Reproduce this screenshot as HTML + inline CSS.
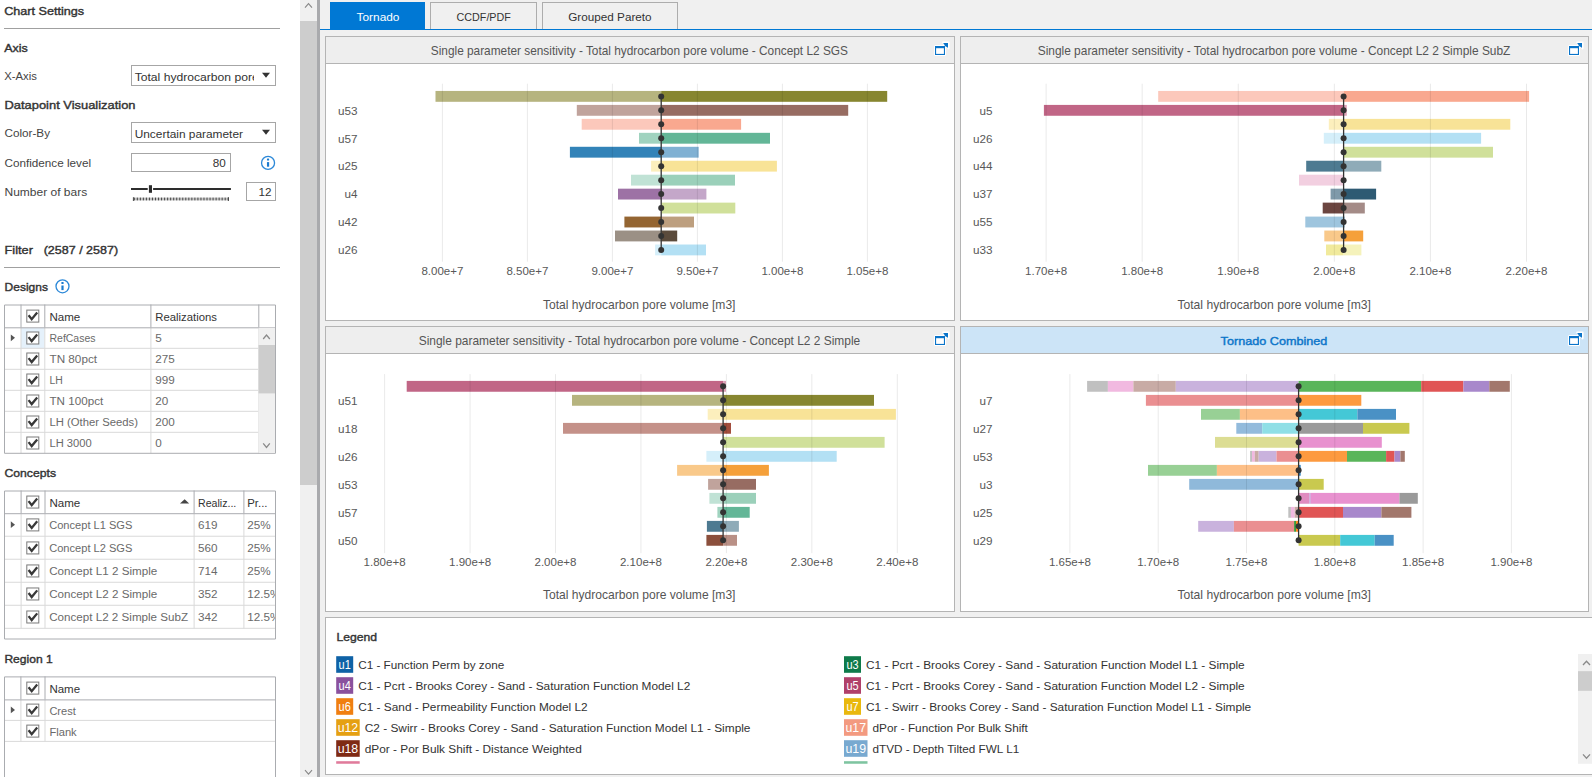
<!DOCTYPE html>
<html><head><meta charset="utf-8"><title>Tornado</title>
<style>
html,body{margin:0;padding:0;width:1592px;height:777px;overflow:hidden;background:#f0f0f0;}
svg{position:absolute;left:0;top:0;display:block;font-family:"Liberation Sans", sans-serif;}
</style></head><body>
<svg width="1592" height="777" viewBox="0 0 1592 777">
<rect x="0" y="0" width="1592" height="777" fill="#f0f0f0"/>
<rect x="0" y="0" width="300" height="777" fill="#ffffff"/>
<rect x="300" y="0" width="17" height="777" fill="#f0f0f0"/>
<rect x="300" y="21" width="17" height="464" fill="#cdcdcd"/>
<path d="M305 7.6 L308.5 3.6 L312 7.6" fill="none" stroke="#888" stroke-width="1.1"/>
<path d="M305 770.2 L308.5 774.2 L312 770.2" fill="none" stroke="#888" stroke-width="1.1"/>
<rect x="317" y="0" width="3" height="777" fill="#a9aaad"/>
<rect x="330" y="2" width="95" height="27" fill="#0078d4"/>
<rect x="430.5" y="2.5" width="106" height="27" fill="#f0f0f0" stroke="#adadad" stroke-width="1"/>
<rect x="542.5" y="2.5" width="135" height="27" fill="#f0f0f0" stroke="#adadad" stroke-width="1"/>
<rect x="320" y="29" width="1272" height="1" fill="#0078d4"/>
<text x="378" y="20.8" font-size="11.8" font-weight="normal" fill="#ffffff" text-anchor="middle" textLength="42.9" lengthAdjust="spacingAndGlyphs">Tornado</text>
<text x="483.7" y="20.8" font-size="11.8" font-weight="normal" fill="#333" text-anchor="middle" textLength="54.3" lengthAdjust="spacingAndGlyphs">CCDF/PDF</text>
<text x="609.9" y="20.8" font-size="11.8" font-weight="normal" fill="#333" text-anchor="middle" textLength="83.5" lengthAdjust="spacingAndGlyphs">Grouped Pareto</text>
<text x="4.2" y="14.8" font-size="11.7" font-weight="normal" fill="#333333" text-anchor="start" textLength="80" lengthAdjust="spacingAndGlyphs" stroke="#333333" stroke-width="0.4">Chart Settings</text>
<line x1="4" y1="28.5" x2="280" y2="28.5" stroke="#a0a0a0" stroke-width="1"/>
<text x="4.2" y="51.5" font-size="11.7" font-weight="normal" fill="#333333" text-anchor="start" textLength="23.6" lengthAdjust="spacingAndGlyphs" stroke="#333333" stroke-width="0.4">Axis</text>
<text x="4.2" y="79.9" font-size="11.7" font-weight="normal" fill="#444444" text-anchor="start" textLength="32.6" lengthAdjust="spacingAndGlyphs">X-Axis</text>
<clipPath id="cb1"><rect x="132" y="66" width="122" height="19"/></clipPath>
<rect x="131.5" y="65.5" width="144" height="20" fill="#ffffff" stroke="#a6a6a6" stroke-width="1"/>
<text x="134.7" y="80.5" font-size="11.7" font-weight="normal" fill="#333333" text-anchor="start" textLength="193.5" lengthAdjust="spacingAndGlyphs" clip-path="url(#cb1)">Total hydrocarbon pore volume [m3]</text>
<path d="M262 72.7 L270 72.7 L266 77.7 Z" fill="#333"/>
<text x="4.5" y="108.8" font-size="11.7" font-weight="normal" fill="#333333" text-anchor="start" textLength="131" lengthAdjust="spacingAndGlyphs" stroke="#333333" stroke-width="0.4">Datapoint Visualization</text>
<text x="4.5" y="136.6" font-size="11.7" font-weight="normal" fill="#444444" text-anchor="start" textLength="45.5" lengthAdjust="spacingAndGlyphs">Color-By</text>
<rect x="131.5" y="122.5" width="144" height="20" fill="#ffffff" stroke="#a6a6a6" stroke-width="1"/>
<text x="134.7" y="137.6" font-size="11.7" font-weight="normal" fill="#333333" text-anchor="start" textLength="108.3" lengthAdjust="spacingAndGlyphs">Uncertain parameter</text>
<path d="M262 129.7 L270 129.7 L266 134.7 Z" fill="#333"/>
<text x="4.5" y="166.6" font-size="11.7" font-weight="normal" fill="#444444" text-anchor="start" textLength="86.5" lengthAdjust="spacingAndGlyphs">Confidence level</text>
<rect x="131.5" y="153.5" width="99" height="18" fill="#ffffff" stroke="#a6a6a6" stroke-width="1"/>
<text x="225.8" y="167.3" font-size="11.7" font-weight="normal" fill="#333333" text-anchor="end">80</text>
<circle cx="268.05" cy="162.9" r="6.5" fill="none" stroke="#2b88d8" stroke-width="1.3"/>
<rect x="266.95" y="162.1" width="2.2" height="4.6" fill="#1a7bd0"/>
<rect x="266.95" y="158.6" width="2.2" height="2" rx="0.6" fill="#1a7bd0"/>
<text x="4.5" y="195.7" font-size="11.7" font-weight="normal" fill="#444444" text-anchor="start" textLength="82.7" lengthAdjust="spacingAndGlyphs">Number of bars</text>
<rect x="131" y="188" width="16.7" height="2" fill="#2d2d2d"/>
<rect x="153.1" y="188" width="77.8" height="2" fill="#2d2d2d"/>
<rect x="148.9" y="185.2" width="3.1" height="7.6" fill="#2d2d2d"/>
<rect x="133.5" y="197.6" width="94.8" height="2.8" fill="#c4c4c4"/>
<path d="M134.30 197.6 V200.4 M137.33 197.6 V200.4 M140.36 197.6 V200.4 M143.39 197.6 V200.4 M146.42 197.6 V200.4 M149.45 197.6 V200.4 M152.48 197.6 V200.4 M155.51 197.6 V200.4 M158.54 197.6 V200.4 M161.57 197.6 V200.4 M164.60 197.6 V200.4 M167.63 197.6 V200.4 M170.66 197.6 V200.4 M173.69 197.6 V200.4 M176.72 197.6 V200.4 M179.75 197.6 V200.4 M182.78 197.6 V200.4 M185.81 197.6 V200.4 M188.84 197.6 V200.4 M191.87 197.6 V200.4 M194.90 197.6 V200.4 M197.93 197.6 V200.4 M200.96 197.6 V200.4 M203.99 197.6 V200.4 M207.02 197.6 V200.4 M210.05 197.6 V200.4 M213.08 197.6 V200.4 M216.11 197.6 V200.4 M219.14 197.6 V200.4 M222.17 197.6 V200.4 M225.20 197.6 V200.4 M228.23 197.6 V200.4 " stroke="#3a3a3a" stroke-width="0.9"/>
<path d="M133.4 197.2 V201 M228.4 197.2 V201" stroke="#3a3a3a" stroke-width="0.9"/>
<rect x="246.5" y="182.5" width="29" height="18" fill="#ffffff" stroke="#a6a6a6" stroke-width="1"/>
<text x="271.5" y="196.4" font-size="11.7" font-weight="normal" fill="#333333" text-anchor="end">12</text>
<text x="4.6" y="253.8" font-size="11.7" font-weight="normal" fill="#333333" text-anchor="start" textLength="28.3" lengthAdjust="spacingAndGlyphs" stroke="#333333" stroke-width="0.4">Filter</text>
<text x="43.7" y="253.8" font-size="11.7" font-weight="normal" fill="#333333" text-anchor="start" textLength="74.4" lengthAdjust="spacingAndGlyphs" stroke="#333333" stroke-width="0.4">(2587 / 2587)</text>
<line x1="4" y1="267.5" x2="280" y2="267.5" stroke="#a0a0a0" stroke-width="1"/>
<text x="4.6" y="290.6" font-size="11.7" font-weight="normal" fill="#333333" text-anchor="start" textLength="43.3" lengthAdjust="spacingAndGlyphs" stroke="#333333" stroke-width="0.4">Designs</text>
<circle cx="62.5" cy="286.3" r="6.5" fill="none" stroke="#2b88d8" stroke-width="1.3"/>
<rect x="61.4" y="285.5" width="2.2" height="4.6" fill="#1a7bd0"/>
<rect x="61.4" y="282.0" width="2.2" height="2" rx="0.6" fill="#1a7bd0"/>
<rect x="4.5" y="305.0" width="271.0" height="148.8" fill="#ffffff"/>
<rect x="21.0" y="327.8" width="23.299999999999997" height="20.5" fill="#e5f1fb"/>
<line x1="4.5" y1="348.3" x2="258.3" y2="348.3" stroke="#d9d9d9" stroke-width="1"/>
<line x1="4.5" y1="369.3" x2="258.3" y2="369.3" stroke="#d9d9d9" stroke-width="1"/>
<line x1="4.5" y1="390.3" x2="258.3" y2="390.3" stroke="#d9d9d9" stroke-width="1"/>
<line x1="4.5" y1="411.3" x2="258.3" y2="411.3" stroke="#d9d9d9" stroke-width="1"/>
<line x1="4.5" y1="432.3" x2="258.3" y2="432.3" stroke="#d9d9d9" stroke-width="1"/>
<line x1="21.0" y1="327.3" x2="21.0" y2="453.3" stroke="#d9d9d9" stroke-width="1"/>
<line x1="44.8" y1="327.3" x2="44.8" y2="453.3" stroke="#d9d9d9" stroke-width="1"/>
<line x1="150.9" y1="327.3" x2="150.9" y2="453.3" stroke="#d9d9d9" stroke-width="1"/>
<line x1="258.8" y1="327.3" x2="258.8" y2="453.3" stroke="#d9d9d9" stroke-width="1"/>
<line x1="21.0" y1="304.5" x2="21.0" y2="327.3" stroke="#aaacb0" stroke-width="1"/>
<line x1="44.8" y1="304.5" x2="44.8" y2="327.3" stroke="#aaacb0" stroke-width="1"/>
<line x1="150.9" y1="304.5" x2="150.9" y2="327.3" stroke="#aaacb0" stroke-width="1"/>
<line x1="258.8" y1="304.5" x2="258.8" y2="327.3" stroke="#aaacb0" stroke-width="1"/>
<line x1="4.5" y1="327.8" x2="275.5" y2="327.8" stroke="#aaacb0" stroke-width="1"/>
<path d="M4.5 453.3 V305.0 H275.5 V453.3 H4.5" fill="none" stroke="#aaacb0" stroke-width="1"/>
<clipPath id="tc1"><rect x="45.3" y="304.5" width="104.60000000000001" height="148.8"/></clipPath>
<clipPath id="tc2"><rect x="151.4" y="304.5" width="106.4" height="148.8"/></clipPath>
<clipPath id="tc3"><rect x="259.3" y="304.5" width="15.699999999999989" height="148.8"/></clipPath>
<rect x="26.8" y="310.09999999999997" width="12" height="12" fill="#ffffff" stroke="#7a7a7a" stroke-width="1"/>
<path d="M28.6 315.2 L31.700000000000003 319.2 L37.2 312.49999999999994" fill="none" stroke="#383838" stroke-width="2.3" stroke-linejoin="miter"/>
<text x="49.4" y="320.59999999999997" font-size="11.7" font-weight="normal" fill="#333333" text-anchor="start" textLength="30.9" lengthAdjust="spacingAndGlyphs" clip-path="url(#tc1)">Name</text>
<text x="155.3" y="320.59999999999997" font-size="11.7" font-weight="normal" fill="#333333" text-anchor="start" textLength="61.6" lengthAdjust="spacingAndGlyphs" clip-path="url(#tc2)">Realizations</text>
<rect x="26.8" y="332.0" width="12" height="12" fill="#ffffff" stroke="#7a7a7a" stroke-width="1"/>
<path d="M28.6 337.1 L31.700000000000003 341.1 L37.2 334.4" fill="none" stroke="#383838" stroke-width="2.3" stroke-linejoin="miter"/>
<path d="M10.8 334.40000000000003 L15.0 337.8 L10.8 341.2 Z" fill="#555"/>
<text x="49.5" y="342.40000000000003" font-size="11.7" font-weight="normal" fill="#6a6a6a" text-anchor="start" textLength="46" lengthAdjust="spacingAndGlyphs" clip-path="url(#tc1)">RefCases</text>
<text x="155.3" y="342.40000000000003" font-size="11.7" font-weight="normal" fill="#6a6a6a" text-anchor="start" clip-path="url(#tc2)">5</text>
<rect x="26.8" y="353.0" width="12" height="12" fill="#ffffff" stroke="#7a7a7a" stroke-width="1"/>
<path d="M28.6 358.1 L31.700000000000003 362.1 L37.2 355.4" fill="none" stroke="#383838" stroke-width="2.3" stroke-linejoin="miter"/>
<text x="49.5" y="363.40000000000003" font-size="11.7" font-weight="normal" fill="#6a6a6a" text-anchor="start" textLength="47.5" lengthAdjust="spacingAndGlyphs" clip-path="url(#tc1)">TN 80pct</text>
<text x="155.3" y="363.40000000000003" font-size="11.7" font-weight="normal" fill="#6a6a6a" text-anchor="start" clip-path="url(#tc2)">275</text>
<rect x="26.8" y="374.0" width="12" height="12" fill="#ffffff" stroke="#7a7a7a" stroke-width="1"/>
<path d="M28.6 379.1 L31.700000000000003 383.1 L37.2 376.4" fill="none" stroke="#383838" stroke-width="2.3" stroke-linejoin="miter"/>
<text x="49.5" y="384.40000000000003" font-size="11.7" font-weight="normal" fill="#6a6a6a" text-anchor="start" textLength="13.3" lengthAdjust="spacingAndGlyphs" clip-path="url(#tc1)">LH</text>
<text x="155.3" y="384.40000000000003" font-size="11.7" font-weight="normal" fill="#6a6a6a" text-anchor="start" clip-path="url(#tc2)">999</text>
<rect x="26.8" y="395.0" width="12" height="12" fill="#ffffff" stroke="#7a7a7a" stroke-width="1"/>
<path d="M28.6 400.1 L31.700000000000003 404.1 L37.2 397.4" fill="none" stroke="#383838" stroke-width="2.3" stroke-linejoin="miter"/>
<text x="49.5" y="405.40000000000003" font-size="11.7" font-weight="normal" fill="#6a6a6a" text-anchor="start" textLength="53.7" lengthAdjust="spacingAndGlyphs" clip-path="url(#tc1)">TN 100pct</text>
<text x="155.3" y="405.40000000000003" font-size="11.7" font-weight="normal" fill="#6a6a6a" text-anchor="start" clip-path="url(#tc2)">20</text>
<rect x="26.8" y="416.0" width="12" height="12" fill="#ffffff" stroke="#7a7a7a" stroke-width="1"/>
<path d="M28.6 421.1 L31.700000000000003 425.1 L37.2 418.4" fill="none" stroke="#383838" stroke-width="2.3" stroke-linejoin="miter"/>
<text x="49.5" y="426.40000000000003" font-size="11.7" font-weight="normal" fill="#6a6a6a" text-anchor="start" textLength="88.5" lengthAdjust="spacingAndGlyphs" clip-path="url(#tc1)">LH (Other Seeds)</text>
<text x="155.3" y="426.40000000000003" font-size="11.7" font-weight="normal" fill="#6a6a6a" text-anchor="start" clip-path="url(#tc2)">200</text>
<rect x="26.8" y="437.0" width="12" height="12" fill="#ffffff" stroke="#7a7a7a" stroke-width="1"/>
<path d="M28.6 442.1 L31.700000000000003 446.1 L37.2 439.4" fill="none" stroke="#383838" stroke-width="2.3" stroke-linejoin="miter"/>
<text x="49.5" y="447.40000000000003" font-size="11.7" font-weight="normal" fill="#6a6a6a" text-anchor="start" textLength="42.2" lengthAdjust="spacingAndGlyphs" clip-path="url(#tc1)">LH 3000</text>
<text x="155.3" y="447.40000000000003" font-size="11.7" font-weight="normal" fill="#6a6a6a" text-anchor="start" clip-path="url(#tc2)">0</text>
<rect x="258.5" y="327.8" width="16.5" height="125" fill="#f0f0f0"/>
<rect x="258.5" y="345" width="16.5" height="48.4" fill="#cdcdcd"/>
<path d="M263.2 339 L266.5 335 L269.8 339" fill="none" stroke="#8a8a8a" stroke-width="1.3"/>
<path d="M263.2 443.4 L266.5 447.4 L269.8 443.4" fill="none" stroke="#8a8a8a" stroke-width="1.3"/>
<text x="4.5" y="476.9" font-size="11.7" font-weight="normal" fill="#333333" text-anchor="start" textLength="51.5" lengthAdjust="spacingAndGlyphs" stroke="#333333" stroke-width="0.4">Concepts</text>
<rect x="4.5" y="491.0" width="271.0" height="148.5" fill="#ffffff"/>
<line x1="4.5" y1="536.22" x2="275.5" y2="536.22" stroke="#d9d9d9" stroke-width="1"/>
<line x1="4.5" y1="559.24" x2="275.5" y2="559.24" stroke="#d9d9d9" stroke-width="1"/>
<line x1="4.5" y1="582.26" x2="275.5" y2="582.26" stroke="#d9d9d9" stroke-width="1"/>
<line x1="4.5" y1="605.2800000000001" x2="275.5" y2="605.2800000000001" stroke="#d9d9d9" stroke-width="1"/>
<line x1="4.5" y1="628.3000000000001" x2="275.5" y2="628.3000000000001" stroke="#d9d9d9" stroke-width="1"/>
<line x1="21.1" y1="513.2" x2="21.1" y2="628.3000000000001" stroke="#d9d9d9" stroke-width="1"/>
<line x1="45.0" y1="513.2" x2="45.0" y2="628.3000000000001" stroke="#d9d9d9" stroke-width="1"/>
<line x1="194.1" y1="513.2" x2="194.1" y2="628.3000000000001" stroke="#d9d9d9" stroke-width="1"/>
<line x1="243.9" y1="513.2" x2="243.9" y2="628.3000000000001" stroke="#d9d9d9" stroke-width="1"/>
<line x1="21.1" y1="490.5" x2="21.1" y2="513.2" stroke="#aaacb0" stroke-width="1"/>
<line x1="45.0" y1="490.5" x2="45.0" y2="513.2" stroke="#aaacb0" stroke-width="1"/>
<line x1="194.1" y1="490.5" x2="194.1" y2="513.2" stroke="#aaacb0" stroke-width="1"/>
<line x1="243.9" y1="490.5" x2="243.9" y2="513.2" stroke="#aaacb0" stroke-width="1"/>
<line x1="4.5" y1="513.7" x2="275.5" y2="513.7" stroke="#aaacb0" stroke-width="1"/>
<path d="M4.5 639 V491.0 H275.5 V639 H4.5" fill="none" stroke="#aaacb0" stroke-width="1"/>
<clipPath id="tc4"><rect x="45.5" y="490.5" width="147.6" height="148.5"/></clipPath>
<clipPath id="tc5"><rect x="194.6" y="490.5" width="48.30000000000001" height="148.5"/></clipPath>
<clipPath id="tc6"><rect x="244.4" y="490.5" width="30.599999999999994" height="148.5"/></clipPath>
<rect x="26.8" y="496.05" width="12" height="12" fill="#ffffff" stroke="#7a7a7a" stroke-width="1"/>
<path d="M28.6 501.15000000000003 L31.700000000000003 505.15000000000003 L37.2 498.45" fill="none" stroke="#383838" stroke-width="2.3" stroke-linejoin="miter"/>
<text x="49.4" y="506.55" font-size="11.7" font-weight="normal" fill="#333333" text-anchor="start" textLength="30.9" lengthAdjust="spacingAndGlyphs" clip-path="url(#tc4)">Name</text>
<text x="198" y="506.55" font-size="11.7" font-weight="normal" fill="#333333" text-anchor="start" textLength="38.3" lengthAdjust="spacingAndGlyphs" clip-path="url(#tc5)">Realiz...</text>
<text x="247.2" y="506.55" font-size="11.7" font-weight="normal" fill="#333333" text-anchor="start" textLength="20.3" lengthAdjust="spacingAndGlyphs" clip-path="url(#tc6)">Pr...</text>
<rect x="26.8" y="518.9100000000001" width="12" height="12" fill="#ffffff" stroke="#7a7a7a" stroke-width="1"/>
<path d="M28.6 524.0100000000001 L31.700000000000003 528.0100000000001 L37.2 521.3100000000001" fill="none" stroke="#383838" stroke-width="2.3" stroke-linejoin="miter"/>
<path d="M10.8 521.3100000000001 L15.0 524.71 L10.8 528.11 Z" fill="#555"/>
<text x="49.2" y="529.3100000000001" font-size="11.7" font-weight="normal" fill="#6a6a6a" text-anchor="start" textLength="83.2" lengthAdjust="spacingAndGlyphs" clip-path="url(#tc4)">Concept L1 SGS</text>
<text x="198" y="529.3100000000001" font-size="11.7" font-weight="normal" fill="#6a6a6a" text-anchor="start" clip-path="url(#tc5)">619</text>
<text x="247.2" y="529.3100000000001" font-size="11.7" font-weight="normal" fill="#6a6a6a" text-anchor="start" clip-path="url(#tc6)">25%</text>
<rect x="26.8" y="541.9300000000001" width="12" height="12" fill="#ffffff" stroke="#7a7a7a" stroke-width="1"/>
<path d="M28.6 547.0300000000001 L31.700000000000003 551.0300000000001 L37.2 544.33" fill="none" stroke="#383838" stroke-width="2.3" stroke-linejoin="miter"/>
<text x="49.2" y="552.33" font-size="11.7" font-weight="normal" fill="#6a6a6a" text-anchor="start" textLength="83.2" lengthAdjust="spacingAndGlyphs" clip-path="url(#tc4)">Concept L2 SGS</text>
<text x="198" y="552.33" font-size="11.7" font-weight="normal" fill="#6a6a6a" text-anchor="start" clip-path="url(#tc5)">560</text>
<text x="247.2" y="552.33" font-size="11.7" font-weight="normal" fill="#6a6a6a" text-anchor="start" clip-path="url(#tc6)">25%</text>
<rect x="26.8" y="564.95" width="12" height="12" fill="#ffffff" stroke="#7a7a7a" stroke-width="1"/>
<path d="M28.6 570.0500000000001 L31.700000000000003 574.0500000000001 L37.2 567.35" fill="none" stroke="#383838" stroke-width="2.3" stroke-linejoin="miter"/>
<text x="49.2" y="575.35" font-size="11.7" font-weight="normal" fill="#6a6a6a" text-anchor="start" textLength="108" lengthAdjust="spacingAndGlyphs" clip-path="url(#tc4)">Concept L1 2 Simple</text>
<text x="198" y="575.35" font-size="11.7" font-weight="normal" fill="#6a6a6a" text-anchor="start" clip-path="url(#tc5)">714</text>
<text x="247.2" y="575.35" font-size="11.7" font-weight="normal" fill="#6a6a6a" text-anchor="start" clip-path="url(#tc6)">25%</text>
<rect x="26.8" y="587.97" width="12" height="12" fill="#ffffff" stroke="#7a7a7a" stroke-width="1"/>
<path d="M28.6 593.07 L31.700000000000003 597.07 L37.2 590.37" fill="none" stroke="#383838" stroke-width="2.3" stroke-linejoin="miter"/>
<text x="49.2" y="598.37" font-size="11.7" font-weight="normal" fill="#6a6a6a" text-anchor="start" textLength="108" lengthAdjust="spacingAndGlyphs" clip-path="url(#tc4)">Concept L2 2 Simple</text>
<text x="198" y="598.37" font-size="11.7" font-weight="normal" fill="#6a6a6a" text-anchor="start" clip-path="url(#tc5)">352</text>
<text x="247.2" y="598.37" font-size="11.7" font-weight="normal" fill="#6a6a6a" text-anchor="start" clip-path="url(#tc6)">12.5%</text>
<rect x="26.8" y="610.9900000000001" width="12" height="12" fill="#ffffff" stroke="#7a7a7a" stroke-width="1"/>
<path d="M28.6 616.0900000000001 L31.700000000000003 620.0900000000001 L37.2 613.3900000000001" fill="none" stroke="#383838" stroke-width="2.3" stroke-linejoin="miter"/>
<text x="49.2" y="621.3900000000001" font-size="11.7" font-weight="normal" fill="#6a6a6a" text-anchor="start" textLength="138.9" lengthAdjust="spacingAndGlyphs" clip-path="url(#tc4)">Concept L2 2 Simple SubZ</text>
<text x="198" y="621.3900000000001" font-size="11.7" font-weight="normal" fill="#6a6a6a" text-anchor="start" clip-path="url(#tc5)">342</text>
<text x="247.2" y="621.3900000000001" font-size="11.7" font-weight="normal" fill="#6a6a6a" text-anchor="start" clip-path="url(#tc6)">12.5%</text>
<path d="M180 503.6 L184.6 499.2 L189.2 503.6 Z" fill="#444"/>
<text x="4.4" y="663" font-size="11.7" font-weight="normal" fill="#333333" text-anchor="start" textLength="48.4" lengthAdjust="spacingAndGlyphs" stroke="#333333" stroke-width="0.4">Region 1</text>
<rect x="4.5" y="676.9" width="271.0" height="123.60000000000002" fill="#ffffff"/>
<line x1="4.5" y1="720.4" x2="275.5" y2="720.4" stroke="#d9d9d9" stroke-width="1"/>
<line x1="4.5" y1="741.4" x2="275.5" y2="741.4" stroke="#d9d9d9" stroke-width="1"/>
<line x1="20.9" y1="699.4" x2="20.9" y2="741.4" stroke="#d9d9d9" stroke-width="1"/>
<line x1="45.0" y1="699.4" x2="45.0" y2="741.4" stroke="#d9d9d9" stroke-width="1"/>
<line x1="20.9" y1="676.4" x2="20.9" y2="699.4" stroke="#aaacb0" stroke-width="1"/>
<line x1="45.0" y1="676.4" x2="45.0" y2="699.4" stroke="#aaacb0" stroke-width="1"/>
<line x1="4.5" y1="699.9" x2="275.5" y2="699.9" stroke="#aaacb0" stroke-width="1"/>
<path d="M4.5 800 V676.9 H275.5 V800" fill="none" stroke="#aaacb0" stroke-width="1"/>
<clipPath id="tc7"><rect x="45.5" y="676.4" width="229.5" height="123.60000000000002"/></clipPath>
<rect x="26.8" y="682.1" width="12" height="12" fill="#ffffff" stroke="#7a7a7a" stroke-width="1"/>
<path d="M28.6 687.2 L31.700000000000003 691.2 L37.2 684.5" fill="none" stroke="#383838" stroke-width="2.3" stroke-linejoin="miter"/>
<text x="49.4" y="692.6" font-size="11.7" font-weight="normal" fill="#333333" text-anchor="start" textLength="30.7" lengthAdjust="spacingAndGlyphs" clip-path="url(#tc7)">Name</text>
<rect x="26.8" y="704.1" width="12" height="12" fill="#ffffff" stroke="#7a7a7a" stroke-width="1"/>
<path d="M28.6 709.2 L31.700000000000003 713.2 L37.2 706.5" fill="none" stroke="#383838" stroke-width="2.3" stroke-linejoin="miter"/>
<path d="M10.8 706.5 L15.0 709.9 L10.8 713.3 Z" fill="#555"/>
<text x="49.4" y="714.5" font-size="11.7" font-weight="normal" fill="#6a6a6a" text-anchor="start" textLength="26.4" lengthAdjust="spacingAndGlyphs" clip-path="url(#tc7)">Crest</text>
<rect x="26.8" y="725.1" width="12" height="12" fill="#ffffff" stroke="#7a7a7a" stroke-width="1"/>
<path d="M28.6 730.2 L31.700000000000003 734.2 L37.2 727.5" fill="none" stroke="#383838" stroke-width="2.3" stroke-linejoin="miter"/>
<text x="49.4" y="735.5" font-size="11.7" font-weight="normal" fill="#6a6a6a" text-anchor="start" textLength="27.3" lengthAdjust="spacingAndGlyphs" clip-path="url(#tc7)">Flank</text>
<rect x="325.5" y="36.5" width="629" height="284" fill="#ffffff" stroke="#b4b4b4" stroke-width="1"/>
<rect x="326" y="37" width="628" height="26" fill="#eeeeee"/>
<line x1="326" y1="63.5" x2="954" y2="63.5" stroke="#b4b4b4" stroke-width="1"/>
<text x="639.35" y="54.85" font-size="11.85" font-weight="normal" fill="#555555" text-anchor="middle" textLength="417.1" lengthAdjust="spacingAndGlyphs">Single parameter sensitivity - Total hydrocarbon pore volume - Concept L2 SGS</text>
<path d="M943 42.4 H948.8 V48.6 Z" fill="#ffffff" stroke="#ffffff" stroke-width="1.6" stroke-linejoin="round"/>
<rect x="934" y="45" width="12" height="11" rx="1.5" fill="#ffffff"/>
<rect x="935.55" y="46.55" width="8.9" height="7.9" fill="#ffffff" stroke="#0a74c9" stroke-width="1.1"/>
<rect x="935" y="46" width="10" height="2.2" fill="#0a74c9"/>
<path d="M943 43 H948 V48 Z" fill="#0a74c9"/>
<path d="M944.5 44.4 L946.6 46.6" stroke="#0a74c9" stroke-width="1.3"/>
<rect x="960.5" y="36.5" width="628" height="284" fill="#ffffff" stroke="#b4b4b4" stroke-width="1"/>
<rect x="961" y="37" width="627" height="26" fill="#eeeeee"/>
<line x1="961" y1="63.5" x2="1588" y2="63.5" stroke="#b4b4b4" stroke-width="1"/>
<text x="1274.05" y="54.85" font-size="11.85" font-weight="normal" fill="#555555" text-anchor="middle" textLength="472.7" lengthAdjust="spacingAndGlyphs">Single parameter sensitivity - Total hydrocarbon pore volume - Concept L2 2 Simple SubZ</text>
<path d="M1577 42.4 H1582.8 V48.6 Z" fill="#ffffff" stroke="#ffffff" stroke-width="1.6" stroke-linejoin="round"/>
<rect x="1568" y="45" width="12" height="11" rx="1.5" fill="#ffffff"/>
<rect x="1569.55" y="46.55" width="8.9" height="7.9" fill="#ffffff" stroke="#0a74c9" stroke-width="1.1"/>
<rect x="1569" y="46" width="10" height="2.2" fill="#0a74c9"/>
<path d="M1577 43 H1582 V48 Z" fill="#0a74c9"/>
<path d="M1578.5 44.4 L1580.6 46.6" stroke="#0a74c9" stroke-width="1.3"/>
<rect x="325.5" y="326.5" width="629" height="285" fill="#ffffff" stroke="#b4b4b4" stroke-width="1"/>
<rect x="326" y="327" width="628" height="26" fill="#eeeeee"/>
<line x1="326" y1="353.5" x2="954" y2="353.5" stroke="#b4b4b4" stroke-width="1"/>
<text x="639.45" y="344.85" font-size="11.85" font-weight="normal" fill="#555555" text-anchor="middle" textLength="441.5" lengthAdjust="spacingAndGlyphs">Single parameter sensitivity - Total hydrocarbon pore volume - Concept L2 2 Simple</text>
<path d="M943 332.4 H948.8 V338.6 Z" fill="#ffffff" stroke="#ffffff" stroke-width="1.6" stroke-linejoin="round"/>
<rect x="934" y="335" width="12" height="11" rx="1.5" fill="#ffffff"/>
<rect x="935.55" y="336.55" width="8.9" height="7.9" fill="#ffffff" stroke="#0a74c9" stroke-width="1.1"/>
<rect x="935" y="336" width="10" height="2.2" fill="#0a74c9"/>
<path d="M943 333 H948 V338 Z" fill="#0a74c9"/>
<path d="M944.5 334.4 L946.6 336.6" stroke="#0a74c9" stroke-width="1.3"/>
<rect x="960.5" y="326.5" width="628" height="285" fill="#ffffff" stroke="#b4b4b4" stroke-width="1"/>
<rect x="961" y="327" width="627" height="26" fill="#cce4f7"/>
<line x1="961" y1="353.5" x2="1588" y2="353.5" stroke="#b4b4b4" stroke-width="1"/>
<text x="1274" y="344.9" font-size="11.7" font-weight="normal" fill="#0a74c9" text-anchor="middle" textLength="106.8" lengthAdjust="spacingAndGlyphs" stroke="#0a74c9" stroke-width="0.4">Tornado Combined</text>
<path d="M1577 332.4 H1582.8 V338.6 Z" fill="#ffffff" stroke="#ffffff" stroke-width="1.6" stroke-linejoin="round"/>
<rect x="1568" y="335" width="12" height="11" rx="1.5" fill="#ffffff"/>
<rect x="1569.55" y="336.55" width="8.9" height="7.9" fill="#ffffff" stroke="#0a74c9" stroke-width="1.1"/>
<rect x="1569" y="336" width="10" height="2.2" fill="#0a74c9"/>
<path d="M1577 333 H1582 V338 Z" fill="#0a74c9"/>
<path d="M1578.5 334.4 L1580.6 336.6" stroke="#0a74c9" stroke-width="1.3"/>
<text x="442.4" y="275.4" font-size="11.6" font-weight="normal" fill="#585858" text-anchor="middle" textLength="42" lengthAdjust="spacingAndGlyphs">8.00e+7</text>
<text x="527.4" y="275.4" font-size="11.6" font-weight="normal" fill="#585858" text-anchor="middle" textLength="42" lengthAdjust="spacingAndGlyphs">8.50e+7</text>
<text x="612.4" y="275.4" font-size="11.6" font-weight="normal" fill="#585858" text-anchor="middle" textLength="42" lengthAdjust="spacingAndGlyphs">9.00e+7</text>
<text x="697.4" y="275.4" font-size="11.6" font-weight="normal" fill="#585858" text-anchor="middle" textLength="42" lengthAdjust="spacingAndGlyphs">9.50e+7</text>
<text x="782.4" y="275.4" font-size="11.6" font-weight="normal" fill="#585858" text-anchor="middle" textLength="42" lengthAdjust="spacingAndGlyphs">1.00e+8</text>
<text x="867.4" y="275.4" font-size="11.6" font-weight="normal" fill="#585858" text-anchor="middle" textLength="42" lengthAdjust="spacingAndGlyphs">1.05e+8</text>
<text x="357.6" y="114.63499999999999" font-size="11.7" font-weight="normal" fill="#585858" text-anchor="end">u53</text>
<text x="357.6" y="142.55500000000004" font-size="11.7" font-weight="normal" fill="#585858" text-anchor="end">u57</text>
<text x="357.6" y="170.47500000000002" font-size="11.7" font-weight="normal" fill="#585858" text-anchor="end">u25</text>
<text x="357.6" y="198.39500000000004" font-size="11.7" font-weight="normal" fill="#585858" text-anchor="end">u4</text>
<text x="357.6" y="226.31500000000005" font-size="11.7" font-weight="normal" fill="#585858" text-anchor="end">u42</text>
<text x="357.6" y="254.235" font-size="11.7" font-weight="normal" fill="#585858" text-anchor="end">u26</text>
<rect x="435.50" y="90.95" width="225.70" height="10.85" fill="#b6b47f"/>
<rect x="661.20" y="90.95" width="226.00" height="10.85" fill="#878630"/>
<rect x="576.80" y="104.91" width="84.40" height="10.85" fill="#c0a39c"/>
<rect x="661.20" y="104.91" width="187.00" height="10.85" fill="#976c62"/>
<rect x="581.70" y="118.87" width="79.50" height="10.85" fill="#fcc8bb"/>
<rect x="661.20" y="118.87" width="79.90" height="10.85" fill="#f9a88f"/>
<rect x="639.00" y="132.83" width="22.20" height="10.85" fill="#a0d3bf"/>
<rect x="661.20" y="132.83" width="108.80" height="10.85" fill="#63b697"/>
<rect x="569.90" y="146.79" width="91.30" height="10.85" fill="#3383b8"/>
<rect x="661.20" y="146.79" width="37.50" height="10.85" fill="#80b1d3"/>
<rect x="651.10" y="160.75" width="10.10" height="10.85" fill="#fcefbd"/>
<rect x="661.20" y="160.75" width="115.70" height="10.85" fill="#f8e397"/>
<rect x="631.00" y="174.71" width="30.20" height="10.85" fill="#c0e2d5"/>
<rect x="661.20" y="174.71" width="73.80" height="10.85" fill="#9bd0ba"/>
<rect x="618.00" y="188.67" width="43.20" height="10.85" fill="#9d72a5"/>
<rect x="661.20" y="188.67" width="45.20" height="10.85" fill="#c4a7c9"/>
<rect x="661.20" y="202.63" width="74.10" height="10.85" fill="#d0e09a"/>
<rect x="624.40" y="216.59" width="36.80" height="10.85" fill="#946532"/>
<rect x="661.20" y="216.59" width="32.80" height="10.85" fill="#bd9f7f"/>
<rect x="615.00" y="230.55" width="46.20" height="10.85" fill="#9b9085"/>
<rect x="661.20" y="230.55" width="16.00" height="10.85" fill="#5b4b3c"/>
<rect x="655.10" y="244.51" width="6.10" height="10.85" fill="#d5effa"/>
<rect x="661.20" y="244.51" width="44.80" height="10.85" fill="#b3e0f4"/>
<line x1="442.4" y1="83.7" x2="442.4" y2="261.7" stroke="#000000" stroke-width="1" stroke-opacity="0.085"/>
<line x1="527.4" y1="83.7" x2="527.4" y2="261.7" stroke="#000000" stroke-width="1" stroke-opacity="0.085"/>
<line x1="612.4" y1="83.7" x2="612.4" y2="261.7" stroke="#000000" stroke-width="1" stroke-opacity="0.085"/>
<line x1="697.4" y1="83.7" x2="697.4" y2="261.7" stroke="#000000" stroke-width="1" stroke-opacity="0.085"/>
<line x1="782.4" y1="83.7" x2="782.4" y2="261.7" stroke="#000000" stroke-width="1" stroke-opacity="0.085"/>
<line x1="867.4" y1="83.7" x2="867.4" y2="261.7" stroke="#000000" stroke-width="1" stroke-opacity="0.085"/>
<line x1="661.2" y1="96.375" x2="661.2" y2="249.935" stroke="#333" stroke-width="1.3"/>
<circle cx="661.2" cy="96.38" r="3" fill="#333"/>
<circle cx="661.2" cy="110.34" r="3" fill="#333"/>
<circle cx="661.2" cy="124.30" r="3" fill="#333"/>
<circle cx="661.2" cy="138.25" r="3" fill="#333"/>
<circle cx="661.2" cy="152.22" r="3" fill="#333"/>
<circle cx="661.2" cy="166.18" r="3" fill="#333"/>
<circle cx="661.2" cy="180.13" r="3" fill="#333"/>
<circle cx="661.2" cy="194.09" r="3" fill="#333"/>
<circle cx="661.2" cy="208.06" r="3" fill="#333"/>
<circle cx="661.2" cy="222.02" r="3" fill="#333"/>
<circle cx="661.2" cy="235.98" r="3" fill="#333"/>
<circle cx="661.2" cy="249.94" r="3" fill="#333"/>
<text x="639.2" y="308.6" font-size="11.85" font-weight="normal" fill="#555" text-anchor="middle" textLength="192.6" lengthAdjust="spacingAndGlyphs">Total hydrocarbon pore volume [m3]</text>
<text x="1046.1" y="275.4" font-size="11.6" font-weight="normal" fill="#585858" text-anchor="middle" textLength="42" lengthAdjust="spacingAndGlyphs">1.70e+8</text>
<text x="1142.1799999999998" y="275.4" font-size="11.6" font-weight="normal" fill="#585858" text-anchor="middle" textLength="42" lengthAdjust="spacingAndGlyphs">1.80e+8</text>
<text x="1238.26" y="275.4" font-size="11.6" font-weight="normal" fill="#585858" text-anchor="middle" textLength="42" lengthAdjust="spacingAndGlyphs">1.90e+8</text>
<text x="1334.34" y="275.4" font-size="11.6" font-weight="normal" fill="#585858" text-anchor="middle" textLength="42" lengthAdjust="spacingAndGlyphs">2.00e+8</text>
<text x="1430.4199999999998" y="275.4" font-size="11.6" font-weight="normal" fill="#585858" text-anchor="middle" textLength="42" lengthAdjust="spacingAndGlyphs">2.10e+8</text>
<text x="1526.5" y="275.4" font-size="11.6" font-weight="normal" fill="#585858" text-anchor="middle" textLength="42" lengthAdjust="spacingAndGlyphs">2.20e+8</text>
<text x="992.5" y="114.63499999999999" font-size="11.7" font-weight="normal" fill="#585858" text-anchor="end">u5</text>
<text x="992.5" y="142.55500000000004" font-size="11.7" font-weight="normal" fill="#585858" text-anchor="end">u26</text>
<text x="992.5" y="170.47500000000002" font-size="11.7" font-weight="normal" fill="#585858" text-anchor="end">u44</text>
<text x="992.5" y="198.39500000000004" font-size="11.7" font-weight="normal" fill="#585858" text-anchor="end">u37</text>
<text x="992.5" y="226.31500000000005" font-size="11.7" font-weight="normal" fill="#585858" text-anchor="end">u55</text>
<text x="992.5" y="254.235" font-size="11.7" font-weight="normal" fill="#585858" text-anchor="end">u33</text>
<rect x="1158.20" y="90.95" width="185.40" height="10.85" fill="#fcc8bb"/>
<rect x="1343.60" y="90.95" width="185.50" height="10.85" fill="#f9a88f"/>
<rect x="1043.90" y="104.91" width="299.70" height="10.85" fill="#c16686"/>
<rect x="1343.60" y="104.91" width="3.20" height="10.85" fill="#dca3b7"/>
<rect x="1328.80" y="118.87" width="14.80" height="10.85" fill="#fcefbd"/>
<rect x="1343.60" y="118.87" width="166.70" height="10.85" fill="#f8e397"/>
<rect x="1323.80" y="132.83" width="19.80" height="10.85" fill="#d5effa"/>
<rect x="1343.60" y="132.83" width="137.50" height="10.85" fill="#b3e0f4"/>
<rect x="1343.60" y="146.79" width="149.40" height="10.85" fill="#d0e09a"/>
<rect x="1306.20" y="160.75" width="37.40" height="10.85" fill="#4d7a91"/>
<rect x="1343.60" y="160.75" width="37.70" height="10.85" fill="#8fabb8"/>
<rect x="1299.00" y="174.71" width="44.60" height="10.85" fill="#f2cfe0"/>
<rect x="1330.60" y="188.67" width="13.00" height="10.85" fill="#7f9aaa"/>
<rect x="1343.60" y="188.67" width="32.50" height="10.85" fill="#2e5a73"/>
<rect x="1322.70" y="202.63" width="20.90" height="10.85" fill="#6b4540"/>
<rect x="1343.60" y="202.63" width="21.20" height="10.85" fill="#a48b87"/>
<rect x="1305.30" y="216.59" width="38.30" height="10.85" fill="#9ec5de"/>
<rect x="1343.60" y="216.59" width="1.20" height="10.85" fill="#9ec5de"/>
<rect x="1324.30" y="230.55" width="19.30" height="10.85" fill="#f9c98a"/>
<rect x="1343.60" y="230.55" width="19.60" height="10.85" fill="#f5a03a"/>
<rect x="1326.00" y="244.51" width="17.60" height="10.85" fill="#f1ea9c"/>
<rect x="1343.60" y="244.51" width="17.80" height="10.85" fill="#f5f2bb"/>
<line x1="1046.1" y1="83.7" x2="1046.1" y2="261.7" stroke="#000000" stroke-width="1" stroke-opacity="0.085"/>
<line x1="1142.1799999999998" y1="83.7" x2="1142.1799999999998" y2="261.7" stroke="#000000" stroke-width="1" stroke-opacity="0.085"/>
<line x1="1238.26" y1="83.7" x2="1238.26" y2="261.7" stroke="#000000" stroke-width="1" stroke-opacity="0.085"/>
<line x1="1334.34" y1="83.7" x2="1334.34" y2="261.7" stroke="#000000" stroke-width="1" stroke-opacity="0.085"/>
<line x1="1430.4199999999998" y1="83.7" x2="1430.4199999999998" y2="261.7" stroke="#000000" stroke-width="1" stroke-opacity="0.085"/>
<line x1="1526.5" y1="83.7" x2="1526.5" y2="261.7" stroke="#000000" stroke-width="1" stroke-opacity="0.085"/>
<line x1="1343.6" y1="96.375" x2="1343.6" y2="249.935" stroke="#333" stroke-width="1.3"/>
<circle cx="1343.6" cy="96.38" r="3" fill="#333"/>
<circle cx="1343.6" cy="110.34" r="3" fill="#333"/>
<circle cx="1343.6" cy="124.30" r="3" fill="#333"/>
<circle cx="1343.6" cy="138.25" r="3" fill="#333"/>
<circle cx="1343.6" cy="152.22" r="3" fill="#333"/>
<circle cx="1343.6" cy="166.18" r="3" fill="#333"/>
<circle cx="1343.6" cy="180.13" r="3" fill="#333"/>
<circle cx="1343.6" cy="194.09" r="3" fill="#333"/>
<circle cx="1343.6" cy="208.06" r="3" fill="#333"/>
<circle cx="1343.6" cy="222.02" r="3" fill="#333"/>
<circle cx="1343.6" cy="235.98" r="3" fill="#333"/>
<circle cx="1343.6" cy="249.94" r="3" fill="#333"/>
<text x="1274.2" y="308.6" font-size="11.85" font-weight="normal" fill="#555" text-anchor="middle" textLength="193.5" lengthAdjust="spacingAndGlyphs">Total hydrocarbon pore volume [m3]</text>
<text x="384.6" y="565.6" font-size="11.6" font-weight="normal" fill="#585858" text-anchor="middle" textLength="42" lengthAdjust="spacingAndGlyphs">1.80e+8</text>
<text x="470.05" y="565.6" font-size="11.6" font-weight="normal" fill="#585858" text-anchor="middle" textLength="42" lengthAdjust="spacingAndGlyphs">1.90e+8</text>
<text x="555.5" y="565.6" font-size="11.6" font-weight="normal" fill="#585858" text-anchor="middle" textLength="42" lengthAdjust="spacingAndGlyphs">2.00e+8</text>
<text x="640.95" y="565.6" font-size="11.6" font-weight="normal" fill="#585858" text-anchor="middle" textLength="42" lengthAdjust="spacingAndGlyphs">2.10e+8</text>
<text x="726.4000000000001" y="565.6" font-size="11.6" font-weight="normal" fill="#585858" text-anchor="middle" textLength="42" lengthAdjust="spacingAndGlyphs">2.20e+8</text>
<text x="811.85" y="565.6" font-size="11.6" font-weight="normal" fill="#585858" text-anchor="middle" textLength="42" lengthAdjust="spacingAndGlyphs">2.30e+8</text>
<text x="897.3000000000001" y="565.6" font-size="11.6" font-weight="normal" fill="#585858" text-anchor="middle" textLength="42" lengthAdjust="spacingAndGlyphs">2.40e+8</text>
<text x="357.5" y="404.625" font-size="11.7" font-weight="normal" fill="#585858" text-anchor="end">u51</text>
<text x="357.5" y="432.625" font-size="11.7" font-weight="normal" fill="#585858" text-anchor="end">u18</text>
<text x="357.5" y="460.625" font-size="11.7" font-weight="normal" fill="#585858" text-anchor="end">u26</text>
<text x="357.5" y="488.625" font-size="11.7" font-weight="normal" fill="#585858" text-anchor="end">u53</text>
<text x="357.5" y="516.6249999999999" font-size="11.7" font-weight="normal" fill="#585858" text-anchor="end">u57</text>
<text x="357.5" y="544.6249999999999" font-size="11.7" font-weight="normal" fill="#585858" text-anchor="end">u50</text>
<rect x="406.70" y="380.90" width="316.40" height="10.85" fill="#c16686"/>
<rect x="723.10" y="380.90" width="2.90" height="10.85" fill="#dca3b7"/>
<rect x="572.00" y="394.90" width="151.10" height="10.85" fill="#b6b47f"/>
<rect x="723.10" y="394.90" width="150.90" height="10.85" fill="#878630"/>
<rect x="707.70" y="408.90" width="15.40" height="10.85" fill="#fcefbd"/>
<rect x="723.10" y="408.90" width="172.80" height="10.85" fill="#f8e397"/>
<rect x="563.00" y="422.90" width="160.10" height="10.85" fill="#c49189"/>
<rect x="723.10" y="422.90" width="7.90" height="10.85" fill="#a24d3d"/>
<rect x="723.10" y="436.90" width="161.50" height="10.85" fill="#d0e09a"/>
<rect x="706.40" y="450.90" width="16.70" height="10.85" fill="#d5effa"/>
<rect x="723.10" y="450.90" width="113.60" height="10.85" fill="#b3e0f4"/>
<rect x="677.10" y="464.90" width="46.00" height="10.85" fill="#f9c98a"/>
<rect x="723.10" y="464.90" width="45.80" height="10.85" fill="#f5a03a"/>
<rect x="708.10" y="478.90" width="15.00" height="10.85" fill="#c0a39c"/>
<rect x="723.10" y="478.90" width="32.90" height="10.85" fill="#976c62"/>
<rect x="709.40" y="492.90" width="13.70" height="10.85" fill="#c0e2d5"/>
<rect x="723.10" y="492.90" width="32.90" height="10.85" fill="#9bd0ba"/>
<rect x="717.40" y="506.90" width="5.70" height="10.85" fill="#a0d3bf"/>
<rect x="723.10" y="506.90" width="26.60" height="10.85" fill="#63b697"/>
<rect x="706.90" y="520.90" width="16.20" height="10.85" fill="#4d7a91"/>
<rect x="723.10" y="520.90" width="15.80" height="10.85" fill="#8fabb8"/>
<rect x="706.40" y="534.90" width="16.70" height="10.85" fill="#8b4f3c"/>
<rect x="723.10" y="534.90" width="13.90" height="10.85" fill="#b99086"/>
<line x1="384.6" y1="374.1" x2="384.6" y2="553.2" stroke="#000000" stroke-width="1" stroke-opacity="0.085"/>
<line x1="470.05" y1="374.1" x2="470.05" y2="553.2" stroke="#000000" stroke-width="1" stroke-opacity="0.085"/>
<line x1="555.5" y1="374.1" x2="555.5" y2="553.2" stroke="#000000" stroke-width="1" stroke-opacity="0.085"/>
<line x1="640.95" y1="374.1" x2="640.95" y2="553.2" stroke="#000000" stroke-width="1" stroke-opacity="0.085"/>
<line x1="726.4000000000001" y1="374.1" x2="726.4000000000001" y2="553.2" stroke="#000000" stroke-width="1" stroke-opacity="0.085"/>
<line x1="811.85" y1="374.1" x2="811.85" y2="553.2" stroke="#000000" stroke-width="1" stroke-opacity="0.085"/>
<line x1="897.3000000000001" y1="374.1" x2="897.3000000000001" y2="553.2" stroke="#000000" stroke-width="1" stroke-opacity="0.085"/>
<line x1="723.1" y1="386.325" x2="723.1" y2="540.325" stroke="#333" stroke-width="1.3"/>
<circle cx="723.1" cy="386.32" r="3" fill="#333"/>
<circle cx="723.1" cy="400.32" r="3" fill="#333"/>
<circle cx="723.1" cy="414.32" r="3" fill="#333"/>
<circle cx="723.1" cy="428.32" r="3" fill="#333"/>
<circle cx="723.1" cy="442.32" r="3" fill="#333"/>
<circle cx="723.1" cy="456.32" r="3" fill="#333"/>
<circle cx="723.1" cy="470.32" r="3" fill="#333"/>
<circle cx="723.1" cy="484.32" r="3" fill="#333"/>
<circle cx="723.1" cy="498.32" r="3" fill="#333"/>
<circle cx="723.1" cy="512.33" r="3" fill="#333"/>
<circle cx="723.1" cy="526.33" r="3" fill="#333"/>
<circle cx="723.1" cy="540.33" r="3" fill="#333"/>
<text x="639.2" y="598.6" font-size="11.85" font-weight="normal" fill="#555" text-anchor="middle" textLength="192.6" lengthAdjust="spacingAndGlyphs">Total hydrocarbon pore volume [m3]</text>
<text x="1069.9" y="565.6" font-size="11.6" font-weight="normal" fill="#585858" text-anchor="middle" textLength="42" lengthAdjust="spacingAndGlyphs">1.65e+8</text>
<text x="1158.2" y="565.6" font-size="11.6" font-weight="normal" fill="#585858" text-anchor="middle" textLength="42" lengthAdjust="spacingAndGlyphs">1.70e+8</text>
<text x="1246.5" y="565.6" font-size="11.6" font-weight="normal" fill="#585858" text-anchor="middle" textLength="42" lengthAdjust="spacingAndGlyphs">1.75e+8</text>
<text x="1334.8000000000002" y="565.6" font-size="11.6" font-weight="normal" fill="#585858" text-anchor="middle" textLength="42" lengthAdjust="spacingAndGlyphs">1.80e+8</text>
<text x="1423.1000000000001" y="565.6" font-size="11.6" font-weight="normal" fill="#585858" text-anchor="middle" textLength="42" lengthAdjust="spacingAndGlyphs">1.85e+8</text>
<text x="1511.4" y="565.6" font-size="11.6" font-weight="normal" fill="#585858" text-anchor="middle" textLength="42" lengthAdjust="spacingAndGlyphs">1.90e+8</text>
<text x="992.5" y="404.625" font-size="11.7" font-weight="normal" fill="#585858" text-anchor="end">u7</text>
<text x="992.5" y="432.625" font-size="11.7" font-weight="normal" fill="#585858" text-anchor="end">u27</text>
<text x="992.5" y="460.625" font-size="11.7" font-weight="normal" fill="#585858" text-anchor="end">u53</text>
<text x="992.5" y="488.625" font-size="11.7" font-weight="normal" fill="#585858" text-anchor="end">u3</text>
<text x="992.5" y="516.6249999999999" font-size="11.7" font-weight="normal" fill="#585858" text-anchor="end">u25</text>
<text x="992.5" y="544.6249999999999" font-size="11.7" font-weight="normal" fill="#585858" text-anchor="end">u29</text>
<rect x="1087.10" y="380.90" width="20.80" height="10.85" fill="#c0c0c0"/>
<rect x="1107.90" y="380.90" width="25.50" height="10.85" fill="#f1b9e0"/>
<rect x="1133.40" y="380.90" width="42.40" height="10.85" fill="#c8aba5"/>
<rect x="1175.80" y="380.90" width="122.80" height="10.85" fill="#c9b2dd"/>
<rect x="1298.60" y="380.90" width="122.60" height="10.85" fill="#59b55a"/>
<rect x="1421.20" y="380.90" width="42.20" height="10.85" fill="#e05555"/>
<rect x="1463.40" y="380.90" width="25.90" height="10.85" fill="#a888cb"/>
<rect x="1489.30" y="380.90" width="20.50" height="10.85" fill="#a2776c"/>
<rect x="1145.90" y="394.90" width="152.70" height="10.85" fill="#ea8f91"/>
<rect x="1298.60" y="394.90" width="62.70" height="10.85" fill="#fd9a3f"/>
<rect x="1201.00" y="408.90" width="38.90" height="10.85" fill="#98d095"/>
<rect x="1239.90" y="408.90" width="58.70" height="10.85" fill="#fdbf87"/>
<rect x="1298.60" y="408.90" width="58.80" height="10.85" fill="#44c8d6"/>
<rect x="1357.40" y="408.90" width="38.60" height="10.85" fill="#4a91c5"/>
<rect x="1236.30" y="422.90" width="25.90" height="10.85" fill="#93bbdc"/>
<rect x="1262.20" y="422.90" width="36.40" height="10.85" fill="#8fdfe6"/>
<rect x="1298.60" y="422.90" width="64.40" height="10.85" fill="#9a9a9a"/>
<rect x="1363.00" y="422.90" width="46.40" height="10.85" fill="#c9c94f"/>
<rect x="1215.00" y="436.90" width="83.60" height="10.85" fill="#dcdd93"/>
<rect x="1298.60" y="436.90" width="83.20" height="10.85" fill="#e891cf"/>
<rect x="1250.10" y="450.90" width="1.90" height="10.85" fill="#c0c0c0"/>
<rect x="1252.00" y="450.90" width="2.80" height="10.85" fill="#f1b9e0"/>
<rect x="1254.80" y="450.90" width="3.90" height="10.85" fill="#c8aba5"/>
<rect x="1258.70" y="450.90" width="17.80" height="10.85" fill="#c9b2dd"/>
<rect x="1276.50" y="450.90" width="22.10" height="10.85" fill="#ea8f91"/>
<rect x="1298.60" y="450.90" width="48.40" height="10.85" fill="#fd9a3f"/>
<rect x="1347.00" y="450.90" width="39.10" height="10.85" fill="#59b55a"/>
<rect x="1386.10" y="450.90" width="8.40" height="10.85" fill="#e05555"/>
<rect x="1394.50" y="450.90" width="5.90" height="10.85" fill="#a888cb"/>
<rect x="1400.40" y="450.90" width="4.40" height="10.85" fill="#a2776c"/>
<rect x="1148.00" y="464.90" width="68.90" height="10.85" fill="#98d095"/>
<rect x="1216.90" y="464.90" width="81.70" height="10.85" fill="#fdbf87"/>
<rect x="1298.60" y="464.90" width="2.10" height="10.85" fill="#3a87c0"/>
<rect x="1189.20" y="478.90" width="109.40" height="10.85" fill="#8fb9da"/>
<rect x="1298.60" y="478.90" width="25.10" height="10.85" fill="#c9c94f"/>
<rect x="1298.60" y="492.90" width="10.70" height="10.85" fill="#e08cc0"/>
<rect x="1309.30" y="492.90" width="1.50" height="10.85" fill="#c9a0d8"/>
<rect x="1310.80" y="492.90" width="88.60" height="10.85" fill="#e891cf"/>
<rect x="1399.40" y="492.90" width="18.40" height="10.85" fill="#9a9a9a"/>
<rect x="1288.30" y="506.90" width="2.60" height="10.85" fill="#c0c0c0"/>
<rect x="1290.90" y="506.90" width="3.80" height="10.85" fill="#f1b9e0"/>
<rect x="1294.70" y="506.90" width="3.90" height="10.85" fill="#c8aba5"/>
<rect x="1298.60" y="506.90" width="44.40" height="10.85" fill="#e05555"/>
<rect x="1343.00" y="506.90" width="38.40" height="10.85" fill="#a888cb"/>
<rect x="1381.40" y="506.90" width="30.00" height="10.85" fill="#a2776c"/>
<rect x="1198.20" y="520.90" width="35.70" height="10.85" fill="#c9b2dd"/>
<rect x="1233.90" y="520.90" width="60.20" height="10.85" fill="#ea8f91"/>
<rect x="1294.10" y="520.90" width="1.90" height="10.85" fill="#3a9a3a"/>
<rect x="1296.00" y="520.90" width="2.60" height="10.85" fill="#fd8a20"/>
<rect x="1298.60" y="534.90" width="41.60" height="10.85" fill="#c9c94f"/>
<rect x="1340.20" y="534.90" width="34.50" height="10.85" fill="#44c8d6"/>
<rect x="1374.70" y="534.90" width="19.00" height="10.85" fill="#4a91c5"/>
<line x1="1069.9" y1="374.1" x2="1069.9" y2="553.2" stroke="#000000" stroke-width="1" stroke-opacity="0.085"/>
<line x1="1158.2" y1="374.1" x2="1158.2" y2="553.2" stroke="#000000" stroke-width="1" stroke-opacity="0.085"/>
<line x1="1246.5" y1="374.1" x2="1246.5" y2="553.2" stroke="#000000" stroke-width="1" stroke-opacity="0.085"/>
<line x1="1334.8000000000002" y1="374.1" x2="1334.8000000000002" y2="553.2" stroke="#000000" stroke-width="1" stroke-opacity="0.085"/>
<line x1="1423.1000000000001" y1="374.1" x2="1423.1000000000001" y2="553.2" stroke="#000000" stroke-width="1" stroke-opacity="0.085"/>
<line x1="1511.4" y1="374.1" x2="1511.4" y2="553.2" stroke="#000000" stroke-width="1" stroke-opacity="0.085"/>
<line x1="1298.6" y1="386.325" x2="1298.6" y2="540.325" stroke="#333" stroke-width="1.3"/>
<circle cx="1298.6" cy="386.32" r="3" fill="#333"/>
<circle cx="1298.6" cy="400.32" r="3" fill="#333"/>
<circle cx="1298.6" cy="414.32" r="3" fill="#333"/>
<circle cx="1298.6" cy="428.32" r="3" fill="#333"/>
<circle cx="1298.6" cy="442.32" r="3" fill="#333"/>
<circle cx="1298.6" cy="456.32" r="3" fill="#333"/>
<circle cx="1298.6" cy="470.32" r="3" fill="#333"/>
<circle cx="1298.6" cy="484.32" r="3" fill="#333"/>
<circle cx="1298.6" cy="498.32" r="3" fill="#333"/>
<circle cx="1298.6" cy="512.33" r="3" fill="#333"/>
<circle cx="1298.6" cy="526.33" r="3" fill="#333"/>
<circle cx="1298.6" cy="540.33" r="3" fill="#333"/>
<text x="1274.2" y="598.6" font-size="11.85" font-weight="normal" fill="#555" text-anchor="middle" textLength="193.5" lengthAdjust="spacingAndGlyphs">Total hydrocarbon pore volume [m3]</text>
<rect x="325.5" y="617.5" width="1280" height="157" fill="#ffffff" stroke="#b4b4b4" stroke-width="1"/>
<text x="336.4" y="641" font-size="11.7" font-weight="normal" fill="#333333" text-anchor="start" textLength="40.6" lengthAdjust="spacingAndGlyphs" stroke="#333333" stroke-width="0.4">Legend</text>
<clipPath id="legclip"><rect x="326" y="618" width="1252" height="145.8"/></clipPath>
<g clip-path="url(#legclip)">
<rect x="336.2" y="656.2" width="17" height="16.6" fill="#0e62a6"/>
<text x="344.7" y="669.0" font-size="12.2" font-weight="normal" fill="#ffffff" text-anchor="middle" textLength="12.2" lengthAdjust="spacingAndGlyphs">u1</text>
<text x="358.2" y="668.6" font-size="11.7" font-weight="normal" fill="#333333" text-anchor="start" textLength="146.1" lengthAdjust="spacingAndGlyphs">C1 - Function Perm by zone</text>
<rect x="336.2" y="677.2" width="17" height="16.6" fill="#8a519d"/>
<text x="344.7" y="690.0" font-size="12.2" font-weight="normal" fill="#ffffff" text-anchor="middle" textLength="12.2" lengthAdjust="spacingAndGlyphs">u4</text>
<text x="358.2" y="689.6" font-size="11.7" font-weight="normal" fill="#333333" text-anchor="start" textLength="332.1" lengthAdjust="spacingAndGlyphs">C1 - Pcrt - Brooks Corey - Sand - Saturation Function Model L2</text>
<rect x="336.2" y="698.2" width="17" height="16.6" fill="#f07f10"/>
<text x="344.7" y="711.0" font-size="12.2" font-weight="normal" fill="#ffffff" text-anchor="middle" textLength="12.2" lengthAdjust="spacingAndGlyphs">u6</text>
<text x="358.2" y="710.6" font-size="11.7" font-weight="normal" fill="#333333" text-anchor="start" textLength="229.5" lengthAdjust="spacingAndGlyphs">C1 - Sand - Permeability Function Model L2</text>
<rect x="336.2" y="719.2" width="23.5" height="16.6" fill="#e5a012"/>
<text x="347.95" y="732.0" font-size="12.2" font-weight="normal" fill="#ffffff" text-anchor="middle" textLength="20.6" lengthAdjust="spacingAndGlyphs">u12</text>
<text x="364.7" y="731.6" font-size="11.7" font-weight="normal" fill="#333333" text-anchor="start" textLength="385.8" lengthAdjust="spacingAndGlyphs">C2 - Swirr - Brooks Corey - Sand - Saturation Function Model L1 - Simple</text>
<rect x="336.2" y="740.2" width="23.5" height="16.6" fill="#7f2a14"/>
<text x="347.95" y="753.0" font-size="12.2" font-weight="normal" fill="#ffffff" text-anchor="middle" textLength="20.6" lengthAdjust="spacingAndGlyphs">u18</text>
<text x="364.7" y="752.6" font-size="11.7" font-weight="normal" fill="#333333" text-anchor="start" textLength="217.1" lengthAdjust="spacingAndGlyphs">dPor - Por Bulk Shift - Distance Weighted</text>
<rect x="336.2" y="761.2" width="23.5" height="16.6" fill="#e07b9b"/>
<rect x="844" y="656.2" width="17" height="16.6" fill="#0e7a4a"/>
<text x="852.5" y="669.0" font-size="12.2" font-weight="normal" fill="#ffffff" text-anchor="middle" textLength="12.2" lengthAdjust="spacingAndGlyphs">u3</text>
<text x="866" y="668.6" font-size="11.7" font-weight="normal" fill="#333333" text-anchor="start" textLength="378.7" lengthAdjust="spacingAndGlyphs">C1 - Pcrt - Brooks Corey - Sand - Saturation Function Model L1 - Simple</text>
<rect x="844" y="677.2" width="17" height="16.6" fill="#b0406a"/>
<text x="852.5" y="690.0" font-size="12.2" font-weight="normal" fill="#ffffff" text-anchor="middle" textLength="12.2" lengthAdjust="spacingAndGlyphs">u5</text>
<text x="866" y="689.6" font-size="11.7" font-weight="normal" fill="#333333" text-anchor="start" textLength="378.7" lengthAdjust="spacingAndGlyphs">C1 - Pcrt - Brooks Corey - Sand - Saturation Function Model L2 - Simple</text>
<rect x="844" y="698.2" width="17" height="16.6" fill="#e9b80e"/>
<text x="852.5" y="711.0" font-size="12.2" font-weight="normal" fill="#ffffff" text-anchor="middle" textLength="12.2" lengthAdjust="spacingAndGlyphs">u7</text>
<text x="866" y="710.6" font-size="11.7" font-weight="normal" fill="#333333" text-anchor="start" textLength="385.2" lengthAdjust="spacingAndGlyphs">C1 - Swirr - Brooks Corey - Sand - Saturation Function Model L1 - Simple</text>
<rect x="844" y="719.2" width="23.5" height="16.6" fill="#f39a80"/>
<text x="855.75" y="732.0" font-size="12.2" font-weight="normal" fill="#ffffff" text-anchor="middle" textLength="20.6" lengthAdjust="spacingAndGlyphs">u17</text>
<text x="872.5" y="731.6" font-size="11.7" font-weight="normal" fill="#333333" text-anchor="start" textLength="155.4" lengthAdjust="spacingAndGlyphs">dPor - Function Por Bulk Shift</text>
<rect x="844" y="740.2" width="23.5" height="16.6" fill="#78a9d0"/>
<text x="855.75" y="753.0" font-size="12.2" font-weight="normal" fill="#ffffff" text-anchor="middle" textLength="20.6" lengthAdjust="spacingAndGlyphs">u19</text>
<text x="872.5" y="752.6" font-size="11.7" font-weight="normal" fill="#333333" text-anchor="start" textLength="146.7" lengthAdjust="spacingAndGlyphs">dTVD - Depth Tilted FWL L1</text>
<rect x="844" y="761.2" width="23.5" height="16.6" fill="#7ec4a0"/>
</g>
<rect x="1578" y="654" width="14" height="109.8" fill="#f0f0f0"/>
<rect x="1578" y="671.2" width="14" height="19.6" fill="#cdcdcd"/>
<path d="M1583 665 L1586.5 661.2 L1590 665" fill="none" stroke="#8a8a8a" stroke-width="1.3"/>
<path d="M1583 754.4 L1586.5 758.2 L1590 754.4" fill="none" stroke="#8a8a8a" stroke-width="1.3"/>
</svg>
</body></html>
